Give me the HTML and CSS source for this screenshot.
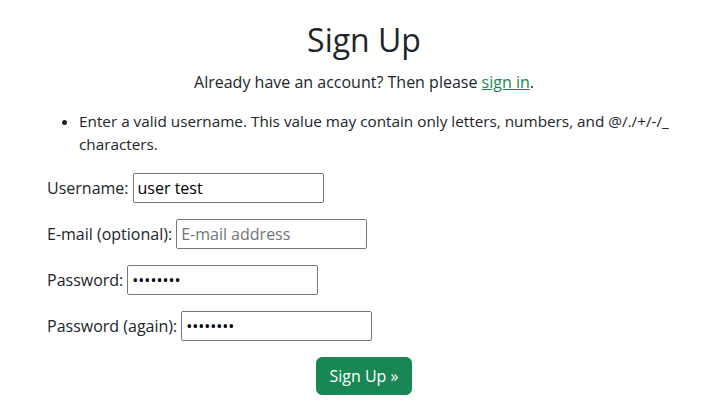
FILE: index.html
```html
<!DOCTYPE html>
<html lang="en">
<head>
<meta charset="utf-8">
<title>Sign Up</title>
<link rel="stylesheet" href="styles.css">
</head>
<body>
<main class="container">
  <h1 class="title">Sign Up</h1>
  <p class="lead">Already have an account? Then please <a class="link" href="#">sign in</a>.</p>
  <form class="signup">
    <ul class="help">
      <li>Enter a valid username. This value may contain only letters, numbers, and @/./+/-/_ characters.</li>
    </ul>
    <p class="row"><label class="label" for="u">Username:</label> <input class="field" id="u" type="text" value="user test"></p>
    <p class="row"><label class="label" for="e">E-mail (optional):</label> <input class="field" id="e" type="email" placeholder="E-mail address"></p>
    <p class="row"><label class="label" for="p1">Password:</label> <input class="field" id="p1" type="password" value="password"></p>
    <p class="row"><label class="label" for="p2">Password (again):</label> <input class="field" id="p2" type="password" value="password"></p>
    <div class="actions"><button class="btn" type="submit">Sign Up &raquo;</button></div>
  </form>
</main>
</body>
</html>
```
FILE: styles.css
```css
* { box-sizing: border-box; }
html, body { margin: 0; padding: 0; background: #fff; }
body {
  font-family: "Open Sans", "Noto Sans", sans-serif;
  font-size: 16px;
  line-height: 1.5;
  color: #212529;
}
.container {
  padding: 21px 38px 0 47px;
}
.title {
  margin: 0 0 11px;
  font-size: 32px;
  font-weight: 400;
  line-height: 1.2;
  text-align: center;
}
.lead {
  margin: 0 0 16px;
  text-align: center;
}
.link {
  color: #198754;
  text-decoration: underline;
}
.help {
  margin: 0 0 17px;
  padding-left: 32px;
  font-size: 15.3px;
  line-height: 23px;
}
.row {
  display: flex;
  align-items: center;
  gap: 4px;
  margin: 0 0 16px;
  height: 30px;
}
.field {
  width: 191px;
  height: 30px;
  border: 1px solid #767676;
  border-radius: 2px;
  padding: 1px 4px;
  font-family: inherit;
  font-size: 16px;
  color: #000;
  background: #fff;
}
.field::placeholder { color: #757575; }
.actions {
  display: flex;
  justify-content: center;
}
.btn {
  font-family: inherit;
  font-size: 16px;
  line-height: 1.5;
  padding: 6px 12px;
  color: #fff;
  background: #198754;
  border: 1px solid #198754;
  border-radius: 6px;
}
```
